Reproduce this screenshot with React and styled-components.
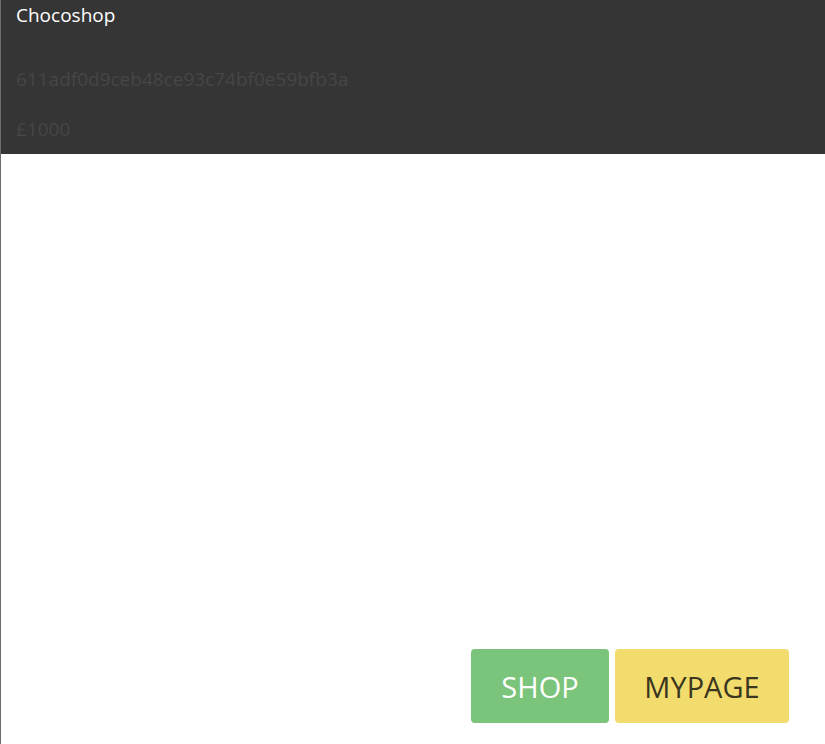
import React from "react";
import styled, { createGlobalStyle } from "styled-components";

const GlobalStyle = createGlobalStyle`
	html, body {
		margin: 0;
		padding: 0;
		height: 100%;
		background: #ffffff;
		font-family: "Open Sans", "Noto Sans", sans-serif;
	}
	#root {
		height: 100%;
	}
`;

function App() {
	return (
		<>
			<GlobalStyle />
			<Page>
				<Header>
					<Title>Chocoshop</Title>
					<Info>611adf0d9ceb48ce93c74bf0e59bfb3a</Info>
					<Info>£1000</Info>
				</Header>
				<Spacer />
				<Nav>
					<NavButton $bg="#7bc47b" $color="#ffffff" $width={138}>
						SHOP
					</NavButton>
					<NavButton $bg="#f2dc6d" $color="#3b3620" $width={174}>
						MYPAGE
					</NavButton>
				</Nav>
			</Page>
		</>
	);
}

export default App;

const Page = styled.div`
	height: 100vh;
	box-sizing: border-box;
	border-left: 1px solid #6e6e6e;
	display: flex;
	flex-direction: column;
`;

const Header = styled.header`
	height: 154px;
	background-color: #353535;
	padding: 0 15px;
	box-sizing: border-box;
	display: flex;
	flex-direction: column;
`;

const Title = styled.div`
	color: #ffffff;
	font-size: 19px;
	line-height: 30px;
`;

const Info = styled.p`
	margin: 25px 0 0;
	color: #464646;
	font-size: 19px;
	line-height: 25px;

	&:first-of-type {
		margin-top: 37px;
	}
`;

const Spacer = styled.div`
	flex: 1;
`;

const Nav = styled.nav`
	display: flex;
	justify-content: flex-end;
	gap: 6px;
	padding: 0 36px 21px 0;
`;

const NavButton = styled.button`
	width: ${(p) => p.$width}px;
	height: 74px;
	border: none;
	border-radius: 4px;
	background-color: ${(p) => p.$bg};
	color: ${(p) => p.$color};
	font-family: "Open Sans", "Noto Sans", sans-serif;
	font-size: 29px;
	cursor: pointer;
`;
